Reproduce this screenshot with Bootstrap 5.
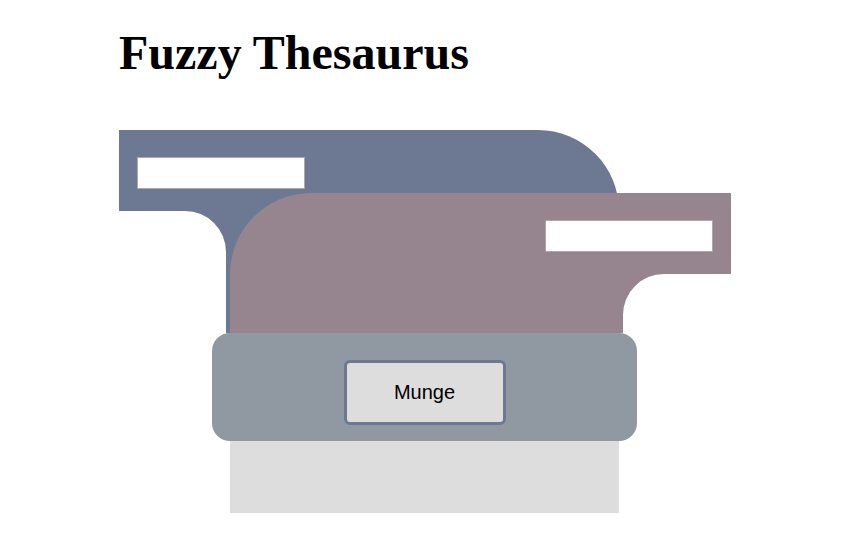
<!DOCTYPE html>
<html lang="en">
<head>
<meta charset="utf-8">
<meta name="viewport" content="width=device-width, initial-scale=1">
<title>Fuzzy Thesaurus</title>
<link href="https://cdn.jsdelivr.net/npm/bootstrap@5.3.0/dist/css/bootstrap.min.css" rel="stylesheet">
<style>
  body { font-family: "Liberation Sans", Arial, sans-serif; color: #000; background: #fff; }
  .page { max-width: 620px; padding: 25px 0 32px 8px; }
  .title { font: bold 48px/55px "Liberation Serif", "Times New Roman", serif; margin-bottom: 50px; }
  /* Two hoppers overlap in the centre and feed the mixer below them */
  .machine {
    grid-template-columns: 93px 18px minmax(0, 1fr) 18px 94px;
    grid-template-rows: 63px 140px auto 72px;
  }
  .hopper-a { grid-area: 1 / 1 / 3 / 4; background: #6d7892; border-top-right-radius: 81px; }
  .hopper-b { grid-area: 2 / 3 / 3 / 6; background: #96858e; border-top-left-radius: 81px; }
  .chute { height: 81px; padding: 27px 18px 0; }
  .notch { background: #fff; }
  .hopper-a .notch { width: 107px; border-top-right-radius: 41px; }
  .hopper-b .notch { width: 108px; border-top-left-radius: 41px; }
  .word { width: 168px; height: 32px; border: 1px solid #a9a9a9; font-size: 20px; }
  .mixer { grid-area: 3 / 2 / 4 / 5; background: #9098a1; border-radius: 18px; padding: 27px 0 16px; }
  .munge, .munge:hover, .munge:active {
    width: 162px; height: 65px; padding: 5px 12px 7px; font-size: 20px; line-height: 24px;
    color: #000; background: #ddd; border: 3px solid #6d7892; border-radius: 6px;
  }
  .result { grid-area: 4 / 3 / 5 / 4; background: #ddd; }
</style>
</head>
<body>
<main class="container-fluid page">
  <h1 class="title">Fuzzy Thesaurus</h1>
  <form class="machine d-grid" onsubmit="return false">
    <div class="hopper-a d-flex flex-column align-items-start">
      <div class="chute flex-shrink-0">
        <input class="word form-control rounded-0 px-2 py-0" id="word-a" type="text" aria-label="First word">
      </div>
      <div class="notch flex-grow-1"></div>
    </div>
    <div class="hopper-b d-flex flex-column align-items-end">
      <div class="chute flex-shrink-0">
        <input class="word form-control rounded-0 px-2 py-0" id="word-b" type="text" aria-label="Second word">
      </div>
      <div class="notch flex-grow-1"></div>
    </div>
    <div class="mixer d-flex justify-content-center">
      <button class="btn munge" type="submit">Munge</button>
    </div>
    <output class="result" for="word-a word-b"></output>
  </form>
</main>
<script src="https://cdn.jsdelivr.net/npm/bootstrap@5.3.0/dist/js/bootstrap.bundle.min.js"></script>
</body>
</html>
